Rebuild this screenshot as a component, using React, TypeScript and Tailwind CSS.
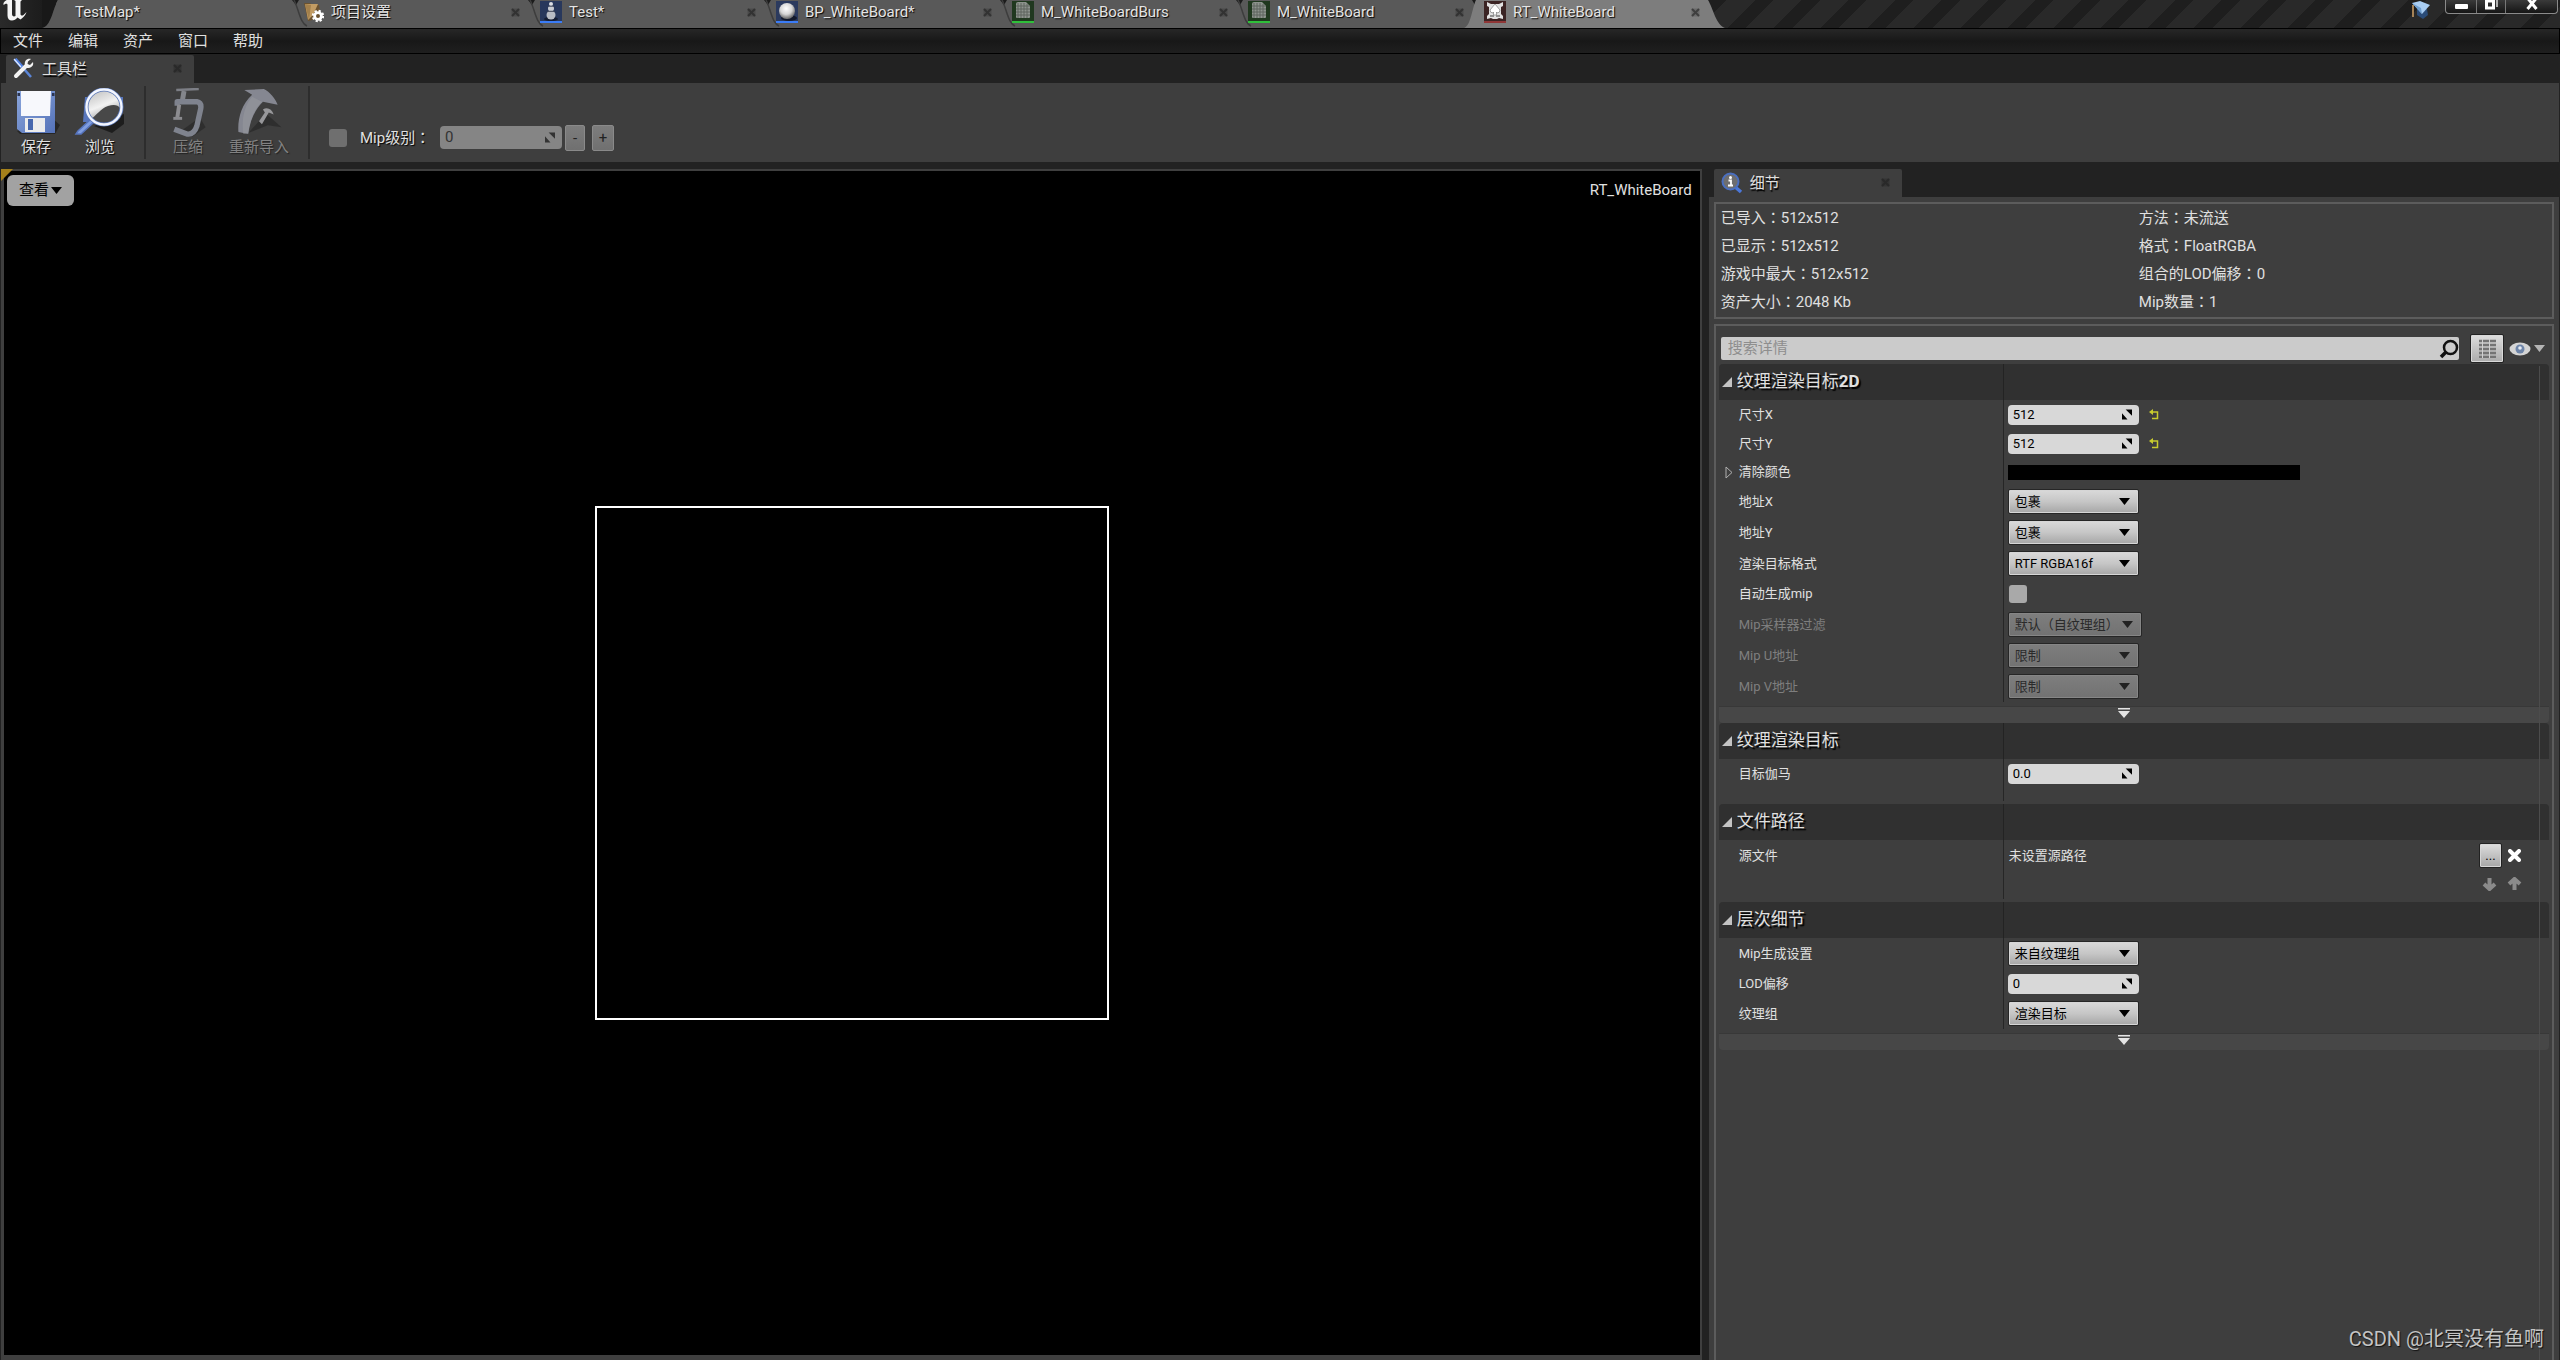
import { useState } from 'react';
import type { ReactNode } from 'react';

type TabKind = 'none' | 'settings' | 'level' | 'blueprint' | 'material' | 'target';

const TABS: { name: string; kind: TabKind }[] = [
  { name: 'TestMap*', kind: 'none' },
  { name: '项目设置', kind: 'settings' },
  { name: 'Test*', kind: 'level' },
  { name: 'BP_WhiteBoard*', kind: 'blueprint' },
  { name: 'M_WhiteBoardBurs', kind: 'material' },
  { name: 'M_WhiteBoard', kind: 'material' },
  { name: 'RT_WhiteBoard', kind: 'target' },
];

const MENUS = ['文件', '编辑', '资产', '窗口', '帮助'];

const INFO = [
  ['已导入', '512x512'],
  ['方法', '未流送'],
  ['已显示', '512x512'],
  ['格式', 'FloatRGBA'],
  ['游戏中最大', '512x512'],
  ['组合的LOD偏移', '0'],
  ['资产大小', '2048 Kb'],
  ['Mip数量', '1'],
];

/* ---------- Icons ---------- */

function UnrealLogo() {
  return (
    <svg width="30" height="26" viewBox="0 0 30 26" fill="#f4f4f4" aria-hidden="true">
      <path d="M1.500 3C3 .5 6-1 10-2V14C10 16 11.500 17 13.500 16V1L12 0H20L18.500 1.500V14C18.500 15.500 20 16 21.500 15L24.500 12C23 16.500 20 18.500 18.500 19.500L15.500 17.500C14 19.500 12 20.500 10 20.500C7 20.500 5.500 18.500 5.500 15.500V5C5.500 3.500 4 3 1.500 5Z" />
    </svg>
  );
}

function CloseMark() {
  return (
    <svg width="9" height="9" viewBox="0 0 9 9" aria-hidden="true">
      <path d="M.5 .5H8.500V8.500H.5Z" fill="#000" opacity=".15" />
      <path d="M1 1L8 8M8 1L1 8" stroke="#222" strokeWidth="2" opacity=".6" />
    </svg>
  );
}

function TabIcon({ kind }: { kind: TabKind }) {
  if (kind === 'settings') {
    return (
      <svg width="20" height="22" viewBox="0 0 20 22" aria-hidden="true">
        <path d="M0 2L6 2L8 4H15L17 17L4 20Z" fill="#6b5230" />
        <path d="M1 3L14 3L9 14L4 19Z" fill="#c29c63" />
        <path d="M1 3L7 4L5 19Z" fill="#a3804c" />
        <circle cx="14" cy="15" r="3.400" fill="none" stroke="#fff" strokeWidth="2.800" />
        <circle cx="14" cy="15" r="5.200" fill="none" stroke="#fff" strokeWidth="2" strokeDasharray="2.200 1.880" />
      </svg>
    );
  }
  if (kind === 'level') {
    return (
      <svg width="22" height="22" viewBox="0 0 22 22" aria-hidden="true">
        <rect width="22" height="22" fill="#28385c" />
        <ellipse cx="11" cy="18" rx="7" ry="2" fill="#141d33" />
        <circle cx="11" cy="14" r="4.500" fill="#b8bcc4" />
        <circle cx="11" cy="7.500" r="3" fill="#c9ccd2" />
        <circle cx="11" cy="3" r="2" fill="#dcdfe3" />
        <path d="M8 5.200H14M7 10.300H15" stroke="#3b4254" strokeWidth="1" />
        <rect y="20" width="22" height="2" fill="#3b7cf5" />
      </svg>
    );
  }
  if (kind === 'blueprint') {
    return (
      <svg width="22" height="22" viewBox="0 0 22 22" aria-hidden="true">
        <defs>
          <radialGradient id="ball" cx=".45" cy=".35" r=".6">
            <stop offset="0" stopColor="#fff" />
            <stop offset=".6" stopColor="#d6d6d6" />
            <stop offset="1" stopColor="#777" />
          </radialGradient>
        </defs>
        <rect width="22" height="22" fill="#2b3a5e" />
        <ellipse cx="13" cy="17" rx="8" ry="3" fill="#131a2c" />
        <circle cx="11" cy="10" r="8" fill="url(#ball)" />
        <rect y="20" width="22" height="2" fill="#3b7cf5" />
      </svg>
    );
  }
  if (kind === 'material') {
    return (
      <svg width="22" height="22" viewBox="0 0 22 22" aria-hidden="true">
        <rect width="22" height="22" fill="#20381f" />
        <path d="M4 3Q4 1 6 1H14L18 5V16Q18 17 17 17H5Q4 17 4 16Z" fill="#8d938d" />
        <path d="M6 2V17M9 2V17M12 2V17M15 3V17M4 5H18M4 8H18M4 11H18M4 14H18" stroke="#5e655e" strokeWidth="1" />
        <rect y="20" width="22" height="2" fill="#2fbf3a" />
      </svg>
    );
  }
  return (
    <svg width="22" height="22" viewBox="0 0 22 22" aria-hidden="true">
      <rect width="22" height="22" fill="#3b2424" />
      <path d="M3 1L7 3H15L19 1V5L17 6V13L19 15V18L15 17L13 18H9L7 17L3 18V15L5 13V6L3 5Z" fill="#e2e2e2" />
      <path d="M11 3L16 9Q16 12 13 12L12.500 11V14H9.500V11L9 12Q6 12 6 9Z" fill="#fff" stroke="#8c8c8c" strokeWidth=".8" />
      <path d="M6 15H10M12 15H16" stroke="#777" strokeWidth="1.500" />
      <rect y="20" width="22" height="2" fill="#8f3636" />
    </svg>
  );
}

function GraduationCap() {
  return (
    <svg width="20" height="20" viewBox="0 0 20 20" aria-hidden="true">
      <path d="M6 9L16 9L17 15L12 19L6 15Z" fill="#2b4c78" />
      <path d="M1 3L9 1L19 5L11 14Z" fill="#a9cdf2" />
      <path d="M1 3L11 14L10 8Z" fill="#6f9fd0" />
      <path d="M2 5V17" stroke="#a58256" strokeWidth="2" />
    </svg>
  );
}

function ToolsIcon() {
  return (
    <svg width="22" height="21" viewBox="0 0 22 21" aria-hidden="true">
      <path d="M2 1L10 10" stroke="#4f7fe0" strokeWidth="3.500" />
      <path d="M1 1L8 9" stroke="#dfe9ff" strokeWidth="1.200" />
      <path d="M11 11L18 19" stroke="#5b86d8" strokeWidth="2.500" />
      <path d="M3 18L13 8" stroke="#f2f2f2" strokeWidth="4" strokeLinecap="round" />
      <path d="M18 1C14 0 11 3 12 7L14 10C18 10 21 8 20 4L17 7L14.500 6L15 3.500Z" fill="#f2f2f2" />
    </svg>
  );
}

function SaveIcon() {
  return (
    <svg width="48" height="48" viewBox="0 0 48 48" aria-hidden="true">
      <defs>
        <linearGradient id="disk" x1="0" y1="0" x2="1" y2="1">
          <stop offset="0" stopColor="#8ba6dc" />
          <stop offset="1" stopColor="#5472b8" />
        </linearGradient>
      </defs>
      <path d="M40 30L48 37L43 46H8L5 43Z" fill="#1d1d1d" opacity=".7" />
      <path d="M5 3H43V45H10L5 41Z" fill="url(#disk)" />
      <path d="M9 3H39L38 28H9Z" fill="#f7f8fc" />
      <rect x="5.500" y="5" width="2.500" height="3" fill="#2b3550" />
      <rect x="40" y="5" width="2.500" height="3" fill="#2b3550" />
      <path d="M13 30H33V44H13Z" fill="#ececec" />
      <rect x="16" y="31" width="5" height="11" fill="#4767ad" />
    </svg>
  );
}

function BrowseIcon() {
  return (
    <svg width="52" height="48" viewBox="0 0 52 48" aria-hidden="true">
      <defs>
        <linearGradient id="lens" x1="0" y1="0" x2=".4" y2="1">
          <stop offset="0" stopColor="#b9b9b9" />
          <stop offset=".55" stopColor="#f2f2f2" />
          <stop offset="1" stopColor="#8e8e8e" />
        </linearGradient>
      </defs>
      <path d="M20 38L50 26V36L38 45Z" fill="#151515" opacity=".8" />
      <path d="M11 9H49V24L40 34H9Z" fill="#5876bd" />
      <path d="M18 30L4 43L2 46H7L20 34Z" fill="#7f9de0" stroke="#5674bd" strokeWidth="1.500" />
      <circle cx="30" cy="19" r="17" fill="url(#lens)" />
      <path d="M17 31C22 28 27 20 34 18C40 16 44 17 46 20C45 29 38 35 30 35C25 35 20 34 17 31Z" fill="#484848" />
      <circle cx="30" cy="19" r="17.500" fill="none" stroke="#5c79b8" strokeWidth="4" />
      <circle cx="30" cy="19" r="17.500" fill="none" stroke="#f3f6ff" strokeWidth="2.400" />
    </svg>
  );
}

function CompressIcon() {
  return (
    <svg width="36" height="50" viewBox="0 0 36 50" aria-hidden="true">
      <path d="M30 30L36 40L22 50L8 46Z" fill="#2b2b2b" opacity=".8" />
      <path d="M6 2L29 1" stroke="#7d7f86" strokeWidth="2.500" />
      <path d="M14 3L12 14" stroke="#83858b" strokeWidth="5" />
      <path d="M7 18V14H27Q32 15 31 21L27 39Q24 48 17 47L4 42" fill="none" stroke="#7f838e" strokeWidth="5.500" strokeLinejoin="round" />
      <path d="M9 17L7 31" stroke="#8c8c90" strokeWidth="4" />
      <path d="M3 31H12" stroke="#8a8a8e" strokeWidth="3" />
    </svg>
  );
}

function ReimportIcon() {
  return (
    <svg width="46" height="50" viewBox="0 0 46 50" aria-hidden="true">
      <path d="M12 46L30 26L46 40L32 38Z" fill="#2b2b2b" opacity=".8" />
      <path d="M8 2L28 1C34 4 40 11 42 17L27 14C19 22 14 32 12 47L2 45C1 32 5 17 16 7Z" fill="#858791" />
      <path d="M16 9L26 14C18 22 14 32 12 46L7 47C5 32 8 18 16 9Z" fill="#9a9ba0" opacity=".5" />
      <path d="M27 22C31 19 36 21 38 27L33 25L26 37L23 34L29 25Z" fill="#97979a" />
    </svg>
  );
}

function DetailsIcon() {
  return (
    <svg width="22" height="22" viewBox="0 0 22 22" aria-hidden="true">
      <path d="M13 14L20 20" stroke="#4b77d9" strokeWidth="3.500" />
      <circle cx="9.500" cy="9.500" r="8" fill="#6e6e70" stroke="#4a6fc0" strokeWidth="2" />
      <circle cx="9.500" cy="5.500" r="1.500" fill="#fff" />
      <path d="M7.500 8.500H10V13M7 13.500H12" stroke="#fff" strokeWidth="1.800" fill="none" />
    </svg>
  );
}

function SpinMark() {
  return (
    <svg width="11" height="11" viewBox="0 0 11 11" aria-hidden="true">
      <path d="M4 0H11V7ZM0 4V11H6Z" fill="currentColor" />
    </svg>
  );
}

function ResetIcon() {
  return (
    <svg width="10" height="11" viewBox="0 0 10 11" aria-hidden="true">
      <path d="M2 3H8.500V9.500H3" fill="none" stroke="#c9cc2e" strokeWidth="1.500" />
      <path d="M0 3L4 0V6Z" fill="#c9cc2e" />
    </svg>
  );
}

function Caret() {
  return (
    <svg width="11" height="7" viewBox="0 0 11 7" aria-hidden="true">
      <path d="M0 0H11L5.500 7Z" fill="currentColor" />
    </svg>
  );
}

function ArrowIcon({ up }: { up?: boolean }) {
  return (
    <svg width="15" height="14" viewBox="0 0 15 14" className={up ? 'rotate-180' : ''} aria-hidden="true">
      <path d="M7.500 1V10M2 7L7.500 12L13 7" fill="none" stroke="#8b8b8b" strokeWidth="4" />
    </svg>
  );
}

/* ---------- Small parts ---------- */

// The Traditional face centres the full-width colon
function Colon() {
  return <span className="font-['Noto_Sans_CJK_TC',sans-serif]">：</span>;
}

function EditorTab({ name, kind, active }: { name: string; kind: TabKind; active: boolean }) {
  const bg = active ? 'bg-[#7d7d7d]' : 'bg-[#595959]';
  return (
    <div className={`relative flex w-[236px] shrink-0 items-start ${bg}`}>
      {kind !== 'none' && !active && (
        <svg width="18" height="28" viewBox="0 0 18 28" className="absolute left-0 top-0" aria-hidden="true">
          <path d="M0 0H7L4 5Z" fill="#1c1c1c" />
          <path d="M2 0C7 10 8 23 15 26" fill="none" stroke="#3d3d3d" strokeWidth="1.500" />
        </svg>
      )}
      {active && (
        <>
          <svg width="20" height="28" viewBox="0 0 20 28" className="absolute -left-2 top-0" aria-hidden="true">
            <path d="M0 0H20V28H0Z" fill="#595959" />
            <path d="M8 0H14L11 5Z" fill="#1c1c1c" />
            <path d="M12 0H20V28H0C7 26 8 8 12 0Z" fill="#7d7d7d" />
          </svg>
          <svg width="18" height="28" viewBox="0 0 18 28" className="absolute left-full top-0" aria-hidden="true">
            <path d="M0 0C5 8 8 25 17 28H0Z" fill="#7d7d7d" />
          </svg>
        </>
      )}
      <button
        type="button"
        className={`relative flex h-6 flex-1 items-center gap-[7px] text-[15px] text-[#e4e4e4] [text-shadow:1px_1px_1px_#000] ${kind === 'none' ? 'pl-[19px]' : 'pl-3'}`}
      >
        {kind !== 'none' && <TabIcon kind={kind} />}
        <span>{name}</span>
      </button>
      {kind !== 'none' && (
        <button type="button" aria-label="关闭" className="relative mr-2 flex h-6 items-center">
          <CloseMark />
        </button>
      )}
    </div>
  );
}

function PanelTab({ icon, title }: { icon: ReactNode; title: string }) {
  return (
    <div className="flex h-7 w-[188px] items-center rounded-t-xs bg-[#3e3e3e] pb-px pl-[7px] pr-3">
      {icon}
      <span className="flex-1 pl-[7px] leading-[22px] [text-shadow:1px_2px_1px_#000]">{title}</span>
      <button type="button" aria-label="关闭"><CloseMark /></button>
    </div>
  );
}

function ToolButton({ icon, label, disabled, wide }: { icon: ReactNode; label: string; disabled?: boolean; wide?: boolean }) {
  return (
    <button
      type="button"
      disabled={disabled}
      className={`flex flex-col items-center justify-between pb-[5px] pt-[5px] text-[15px] leading-[20px] ${wide ? 'w-[78px]' : 'w-16'} ${disabled ? 'text-[#828282] [text-shadow:1px_1px_1px_#222]' : '[text-shadow:1px_1px_1px_#000]'}`}
    >
      {icon}
      {label}
    </button>
  );
}

function NumberField({ id, initial }: { id: string; initial: string }) {
  const [value, setValue] = useState(initial);
  return (
    <div className="flex h-5 w-[131px] items-center rounded bg-[#d8d8d8] pl-[5px] pr-[7px] text-black">
      <input id={id} value={value} onChange={e => setValue(e.target.value)} className="w-full min-w-0 bg-transparent outline-none" />
      <SpinMark />
    </div>
  );
}

function SelectField({ id, value, disabled }: { id: string; value: string; disabled?: boolean }) {
  return (
    <div className={`relative ${value.length > 6 && disabled ? 'w-[134px]' : 'w-[131px]'}`}>
      <select
        id={id}
        disabled={disabled}
        className={`block h-[25px] w-full appearance-none rounded-xs border border-[#262626] pl-[6px] leading-[20px] opacity-100 outline-none ${
          disabled
            ? 'bg-linear-to-b from-[#7e7e7e] to-[#727272] text-[#2a2a2a] shadow-[inset_0_0_0_1px_#868686]'
            : 'bg-linear-to-b from-[#dadada] via-[#c6c6c6] to-[#a6a6a6] text-black shadow-[inset_0_0_0_1px_#d6d6d6]'
        }`}
      >
        <option>{value}</option>
      </select>
      <span className={`pointer-events-none absolute right-[9px] top-[9px] ${disabled ? 'text-[#222]' : 'text-black'}`}>
        <Caret />
      </span>
    </div>
  );
}

function Row({ id, label, height, disabled, expandable, children }: { id: string; label: string; height: string; disabled?: boolean; expandable?: boolean; children: ReactNode }) {
  return (
    <div className={`flex ${height}`}>
      <div className="flex w-[285px] shrink-0 items-center border-r border-[#262626]">
        <span className="flex w-5 justify-center">
          {expandable && (
            <svg width="8" height="13" viewBox="0 0 8 13" aria-hidden="true">
              <path d="M1 1L7 6.500L1 12Z" fill="none" stroke="#b0b0b0" />
            </svg>
          )}
        </span>
        <label htmlFor={id} className={disabled ? 'text-[#7e7e7e]' : ''}>{label}</label>
      </div>
      <div className="flex flex-1 items-center pl-1">{children}</div>
    </div>
  );
}

// Empty stretch that carries the column divider on
function RowSpacer({ height }: { height: string }) {
  return <div className={`w-[285px] border-r border-[#262626] ${height}`} />;
}

function SectionHeader({ title, suffix }: { title: string; suffix?: string }) {
  return (
    <div className="flex h-9 rounded-t bg-[#303030]">
      <h2 className="flex w-[285px] items-center gap-[5px] border-r border-[#232323] pl-[3px] text-[17px] [text-shadow:2px_2px_1px_#000]">
        <svg width="10" height="10" viewBox="0 0 10 10" aria-hidden="true">
          <path d="M10 0V10H0Z" fill="#c4c4c4" />
        </svg>
        <span>{title}{suffix && <b>{suffix}</b>}</span>
      </h2>
    </div>
  );
}

function AdvancedBar() {
  return (
    <button type="button" aria-label="高级" className="mt-1 flex h-[17px] w-full justify-center rounded-b border-t border-[#383838] bg-[#474747] pr-5 pt-px">
      <svg width="12" height="10" viewBox="0 0 12 10" aria-hidden="true">
        <path d="M0 0H12V1.500H0Z" fill="#e4e4e4" />
        <path d="M0 3H12L6 10Z" fill="#e4e4e4" />
      </svg>
    </button>
  );
}

/* ---------- Page ---------- */

export default function App() {
  const [mipOn, setMipOn] = useState(false);
  const [autoMip, setAutoMip] = useState(false);

  return (
    <div className="flex h-screen flex-col overflow-hidden bg-[#222] font-['Roboto','Noto_Sans_CJK_SC',sans-serif] text-[15px] text-[#e0e0e0]">
      {/* Title bar */}
      <header className="flex h-7 shrink-0 bg-[repeating-linear-gradient(135deg,#292929_0px,#292929_20px,#1e1e1e_20px,#1e1e1e_33px)]">
        <div className="relative w-14 shrink-0 bg-linear-to-r from-[#2a2a2a] to-[#181818] pl-[2px]">
          <UnrealLogo />
          <svg width="18" height="28" viewBox="0 0 18 28" className="absolute -right-1 top-0 z-10" aria-hidden="true">
            <path d="M0 0H16C11 8 9 27 0 28Z" fill="#181818" />
            <path d="M18 0H16C11 8 9 27 0 28H18Z" fill="#595959" />
          </svg>
        </div>
        <nav className="flex">
          {TABS.map(t => <EditorTab key={t.name} name={t.name} kind={t.kind} active={t.kind === 'target'} />)}
        </nav>
        <div className="ml-auto flex items-start pr-[2px]">
          <button type="button" aria-label="教程" className="mr-[14px]"><GraduationCap /></button>
          <div className="flex h-[14px] divide-x divide-[#777] rounded-b-sm border border-t-0 border-[#8a8a8a] bg-linear-to-b from-[#3a3a3a] to-[#161616]">
            <button type="button" aria-label="最小化" className="flex w-[31px] justify-center pt-1">
              <svg width="13" height="5" aria-hidden="true"><rect width="13" height="5" rx="1" fill="#fff" /></svg>
            </button>
            <button type="button" aria-label="还原" className="flex w-[29px] justify-center">
              <svg width="13" height="10" viewBox="0 0 13 10" aria-hidden="true">
                <path d="M1.500 1V8H8.500V1Z" fill="none" stroke="#fff" strokeWidth="3" />
                <path d="M12 0V7" stroke="#ddd" strokeWidth="1.500" />
              </svg>
            </button>
            <button type="button" aria-label="关闭窗口" className="flex w-[51px] justify-center">
              <svg width="12" height="10" viewBox="0 0 12 10" aria-hidden="true">
                <path d="M1.500-2L10.500 9M10.500-2L1.500 9" stroke="#fff" strokeWidth="3" />
              </svg>
            </button>
          </div>
        </div>
      </header>

      {/* Menu bar */}
      <nav className="flex h-[26px] shrink-0 items-center gap-[25px] border border-black bg-linear-to-b from-[#272727] via-[#181818] to-[#1f1f1f] pl-3">
        {MENUS.map(m => <button key={m} type="button">{m}</button>)}
      </nav>

      {/* Toolbar */}
      <div className="shrink-0 px-px">
        <div className="pl-[5px] pt-px">
          <PanelTab icon={<ToolsIcon />} title="工具栏" />
        </div>
        <div className="flex h-[79px] bg-[#3e3e3e] pl-[3px]">
          <ToolButton icon={<SaveIcon />} label="保存" />
          <ToolButton icon={<BrowseIcon />} label="浏览" />
          <div className="my-[3px] ml-3 mr-[10px] w-[2px] bg-[#2d2d2d]" />
          <ToolButton icon={<CompressIcon />} label="压缩" disabled />
          <ToolButton icon={<ReimportIcon />} label="重新导入" disabled wide />
          <div className="my-[3px] ml-[10px] mr-[19px] w-[2px] bg-[#2d2d2d]" />
          <div className="flex items-center pt-[30px]">
            <input
              id="mip-toggle"
              type="checkbox"
              checked={mipOn}
              onChange={e => setMipOn(e.target.checked)}
              className="size-[18px] appearance-none rounded-[3px] bg-[#6f6f6f] checked:bg-[#c8c8c8]"
            />
            <label htmlFor="mip-toggle" className="w-[93px] pl-[13px] [text-shadow:1px_1px_1px_#000]">Mip级别<Colon /></label>
            <div className="flex h-[23px] w-[122px] items-center rounded bg-[#858585] pl-[5px] pr-[7px] text-[#333]">
              <input aria-label="Mip级别" defaultValue="0" disabled className="w-full min-w-0 bg-transparent outline-none" />
              <SpinMark />
            </div>
            <button type="button" disabled className="ml-[3px] h-[26px] w-5 rounded-xs border border-[#8a8a8a] bg-linear-to-b from-[#7d7d7d] to-[#707070] leading-[20px] text-[#222]">-</button>
            <button type="button" disabled className="ml-[7px] h-[26px] w-[22px] rounded-xs border border-[#8a8a8a] bg-linear-to-b from-[#7d7d7d] to-[#707070] leading-[20px] text-[#222]">+</button>
          </div>
        </div>
      </div>

      <main className="flex min-h-0 flex-1 gap-[7px] px-px pt-[7px]">
        {/* Texture viewport */}
        <section className="relative flex min-w-0 flex-[2]">
          <div className="flex flex-1 items-center justify-center border-b-[5px] border-l-[3px] border-r-2 border-t-2 border-[#3f3f3f] bg-black">
            <div className="size-[514px] border-2 border-white" />
          </div>
          <svg width="12" height="12" viewBox="0 0 12 12" className="absolute left-0 top-0" aria-hidden="true">
            <path d="M0 0H12L0 12Z" fill="#a5811b" />
          </svg>
          <button type="button" className="absolute left-[6px] top-[6px] flex h-[31px] items-center gap-[2px] rounded-md bg-[#a2a2a2] px-3 text-black">
            查看<Caret />
          </button>
          <span className="absolute right-[10px] top-[10px] leading-[22px]">RT_WhiteBoard</span>
        </section>

        {/* Details panel */}
        <section className="flex min-w-0 flex-1 flex-col">
          <div className="pl-[5px]">
            <PanelTab icon={<DetailsIcon />} title="细节" />
          </div>
          <div className="flex min-h-0 flex-1 flex-col gap-[5px] bg-[#3e3e3e] px-[5px] pt-[5px]">
            <dl className="grid grid-cols-2 border-2 border-[#5c5c5c] pb-px">
              {INFO.map(([k, v]) => (
                <div key={k} className="flex h-7 items-center px-[5px]">
                  <dt>{k}<Colon /></dt>
                  <dd>{v}</dd>
                </div>
              ))}
            </dl>

            <div className="relative flex-1 border-2 border-b-0 border-[#5c5c5c] px-[3px] pt-2 text-[13px]">
              <div className="mb-px flex h-[29px] items-center pl-[2px] pr-1">
                <div className="flex h-[23px] flex-1 items-center rounded-xs bg-[#cbcbcb] pl-[7px]">
                  <input aria-label="搜索详情" placeholder="搜索详情" className="min-w-0 flex-1 bg-transparent text-[15px] text-black outline-none placeholder:text-[#8e8e8e]" />
                  <svg width="20" height="20" viewBox="0 0 20 20" aria-hidden="true">
                    <circle cx="11.500" cy="8.500" r="6.500" fill="none" stroke="#111" strokeWidth="2.500" />
                    <path d="M7 13L2 18" stroke="#111" strokeWidth="3.500" />
                  </svg>
                </div>
                <button type="button" aria-label="属性矩阵" className="ml-[11px] flex h-[29px] w-[34px] items-center justify-center rounded-xs border border-[#222] bg-linear-to-b from-[#dedede] to-[#ababab] shadow-[inset_0_0_0_1px_#d8d8d8]">
                  <svg width="17" height="19" viewBox="0 0 17 19" aria-hidden="true">
                    <path d="M0 2H17M0 6H17M0 10H17M0 14H17M0 18H17" stroke="#747474" strokeWidth="2.500" />
                    <path d="M3.500 0V19M10.500 0V19" stroke="#d0d0d0" strokeWidth="1" />
                  </svg>
                </button>
                <button type="button" aria-label="视图选项" className="ml-[5px] flex items-center gap-[3px] text-[#b4b4b4]">
                  <svg width="22" height="14" viewBox="0 0 22 14" aria-hidden="true">
                    <ellipse cx="11" cy="7" rx="10.500" ry="6.500" fill="#d4d4d4" />
                    <circle cx="11" cy="7" r="4.500" fill="#6d84a8" />
                    <circle cx="11" cy="6" r="1.800" fill="#e6ebf2" />
                  </svg>
                  <Caret />
                </button>
              </div>

              <SectionHeader title="纹理渲染目标" suffix="2D" />
              <Row id="size-x" label="尺寸X" height="h-[29px]">
                <NumberField id="size-x" initial="512" />
                <button type="button" aria-label="重置尺寸X" className="ml-[10px]"><ResetIcon /></button>
              </Row>
              <Row id="size-y" label="尺寸Y" height="h-[29px]">
                <NumberField id="size-y" initial="512" />
                <button type="button" aria-label="重置尺寸Y" className="ml-[10px]"><ResetIcon /></button>
              </Row>
              <Row id="clear-color" label="清除颜色" height="h-7" expandable>
                <button id="clear-color" type="button" className="h-[15px] w-[292px] bg-black" />
              </Row>
              <Row id="addr-x" label="地址X" height="h-[31px]"><SelectField id="addr-x" value="包裹" /></Row>
              <Row id="addr-y" label="地址Y" height="h-[31px]"><SelectField id="addr-y" value="包裹" /></Row>
              <Row id="rt-format" label="渲染目标格式" height="h-[31px]"><SelectField id="rt-format" value="RTF RGBA16f" /></Row>
              <Row id="auto-mip" label="自动生成mip" height="h-[30px]">
                <input
                  id="auto-mip"
                  type="checkbox"
                  checked={autoMip}
                  onChange={e => setAutoMip(e.target.checked)}
                  className="ml-px size-[18px] appearance-none rounded-[3px] bg-[#a9a9a9] checked:bg-[#e0e0e0]"
                />
              </Row>
              <Row id="mip-filter" label="Mip采样器过滤" height="h-[31px]" disabled><SelectField id="mip-filter" value="默认（自纹理组）" disabled /></Row>
              <Row id="mip-u" label="Mip U地址" height="h-[31px]" disabled><SelectField id="mip-u" value="限制" disabled /></Row>
              <Row id="mip-v" label="Mip V地址" height="h-[31px]" disabled><SelectField id="mip-v" value="限制" disabled /></Row>
              <AdvancedBar />

              <SectionHeader title="纹理渲染目标" />
              <Row id="gamma" label="目标伽马" height="h-[29px]"><NumberField id="gamma" initial="0.0" /></Row>
              <RowSpacer height="mb-[3px] h-[13px]" />

              <SectionHeader title="文件路径" />
              <Row id="source-file" label="源文件" height="h-[31px]">
                <output id="source-file" className="flex-1 pl-px">未设置源路径</output>
                <button type="button" aria-label="浏览源文件" className="h-[25px] w-[23px] rounded-xs border border-[#222] bg-linear-to-b from-[#dedede] to-[#a6a6a6] leading-[20px] text-black shadow-[inset_0_0_0_1px_#d6d6d6]">...</button>
                <button type="button" aria-label="清除源文件" className="ml-[6px] mr-7">
                  <svg width="13" height="13" viewBox="0 0 13 13" aria-hidden="true">
                    <path d="M2 2L11 11M11 2L2 11" stroke="#fff" strokeWidth="4" strokeLinecap="round" />
                  </svg>
                </button>
              </Row>
              <div className="flex h-7">
                <RowSpacer height="h-7" />
                <div className="flex flex-1 items-start justify-end gap-[10px] pr-[27px] pt-[6px]">
                  <button type="button" aria-label="下移" disabled><ArrowIcon /></button>
                  <button type="button" aria-label="上移" disabled><ArrowIcon up /></button>
                </div>
              </div>

              <div className="pt-[3px]"><SectionHeader title="层次细节" /></div>
              <Row id="mip-gen" label="Mip生成设置" height="h-[31px]"><SelectField id="mip-gen" value="来自纹理组" /></Row>
              <Row id="lod-bias" label="LOD偏移" height="h-[29px]"><NumberField id="lod-bias" initial="0" /></Row>
              <Row id="tex-group" label="纹理组" height="h-[31px]"><SelectField id="tex-group" value="渲染目标" /></Row>
              <AdvancedBar />

              {/* Scrollbar track */}
              <div className="pointer-events-none absolute bottom-0 right-3 top-10 w-px bg-[#4c4c4c]" />
            </div>
          </div>
        </section>
      </main>

      <p className="pointer-events-none absolute bottom-2 right-4 text-[20px] leading-[26px] text-[#c4c4c4] [text-shadow:1px_1px_1px_#111]">CSDN @北冥没有鱼啊</p>
    </div>
  );
}
